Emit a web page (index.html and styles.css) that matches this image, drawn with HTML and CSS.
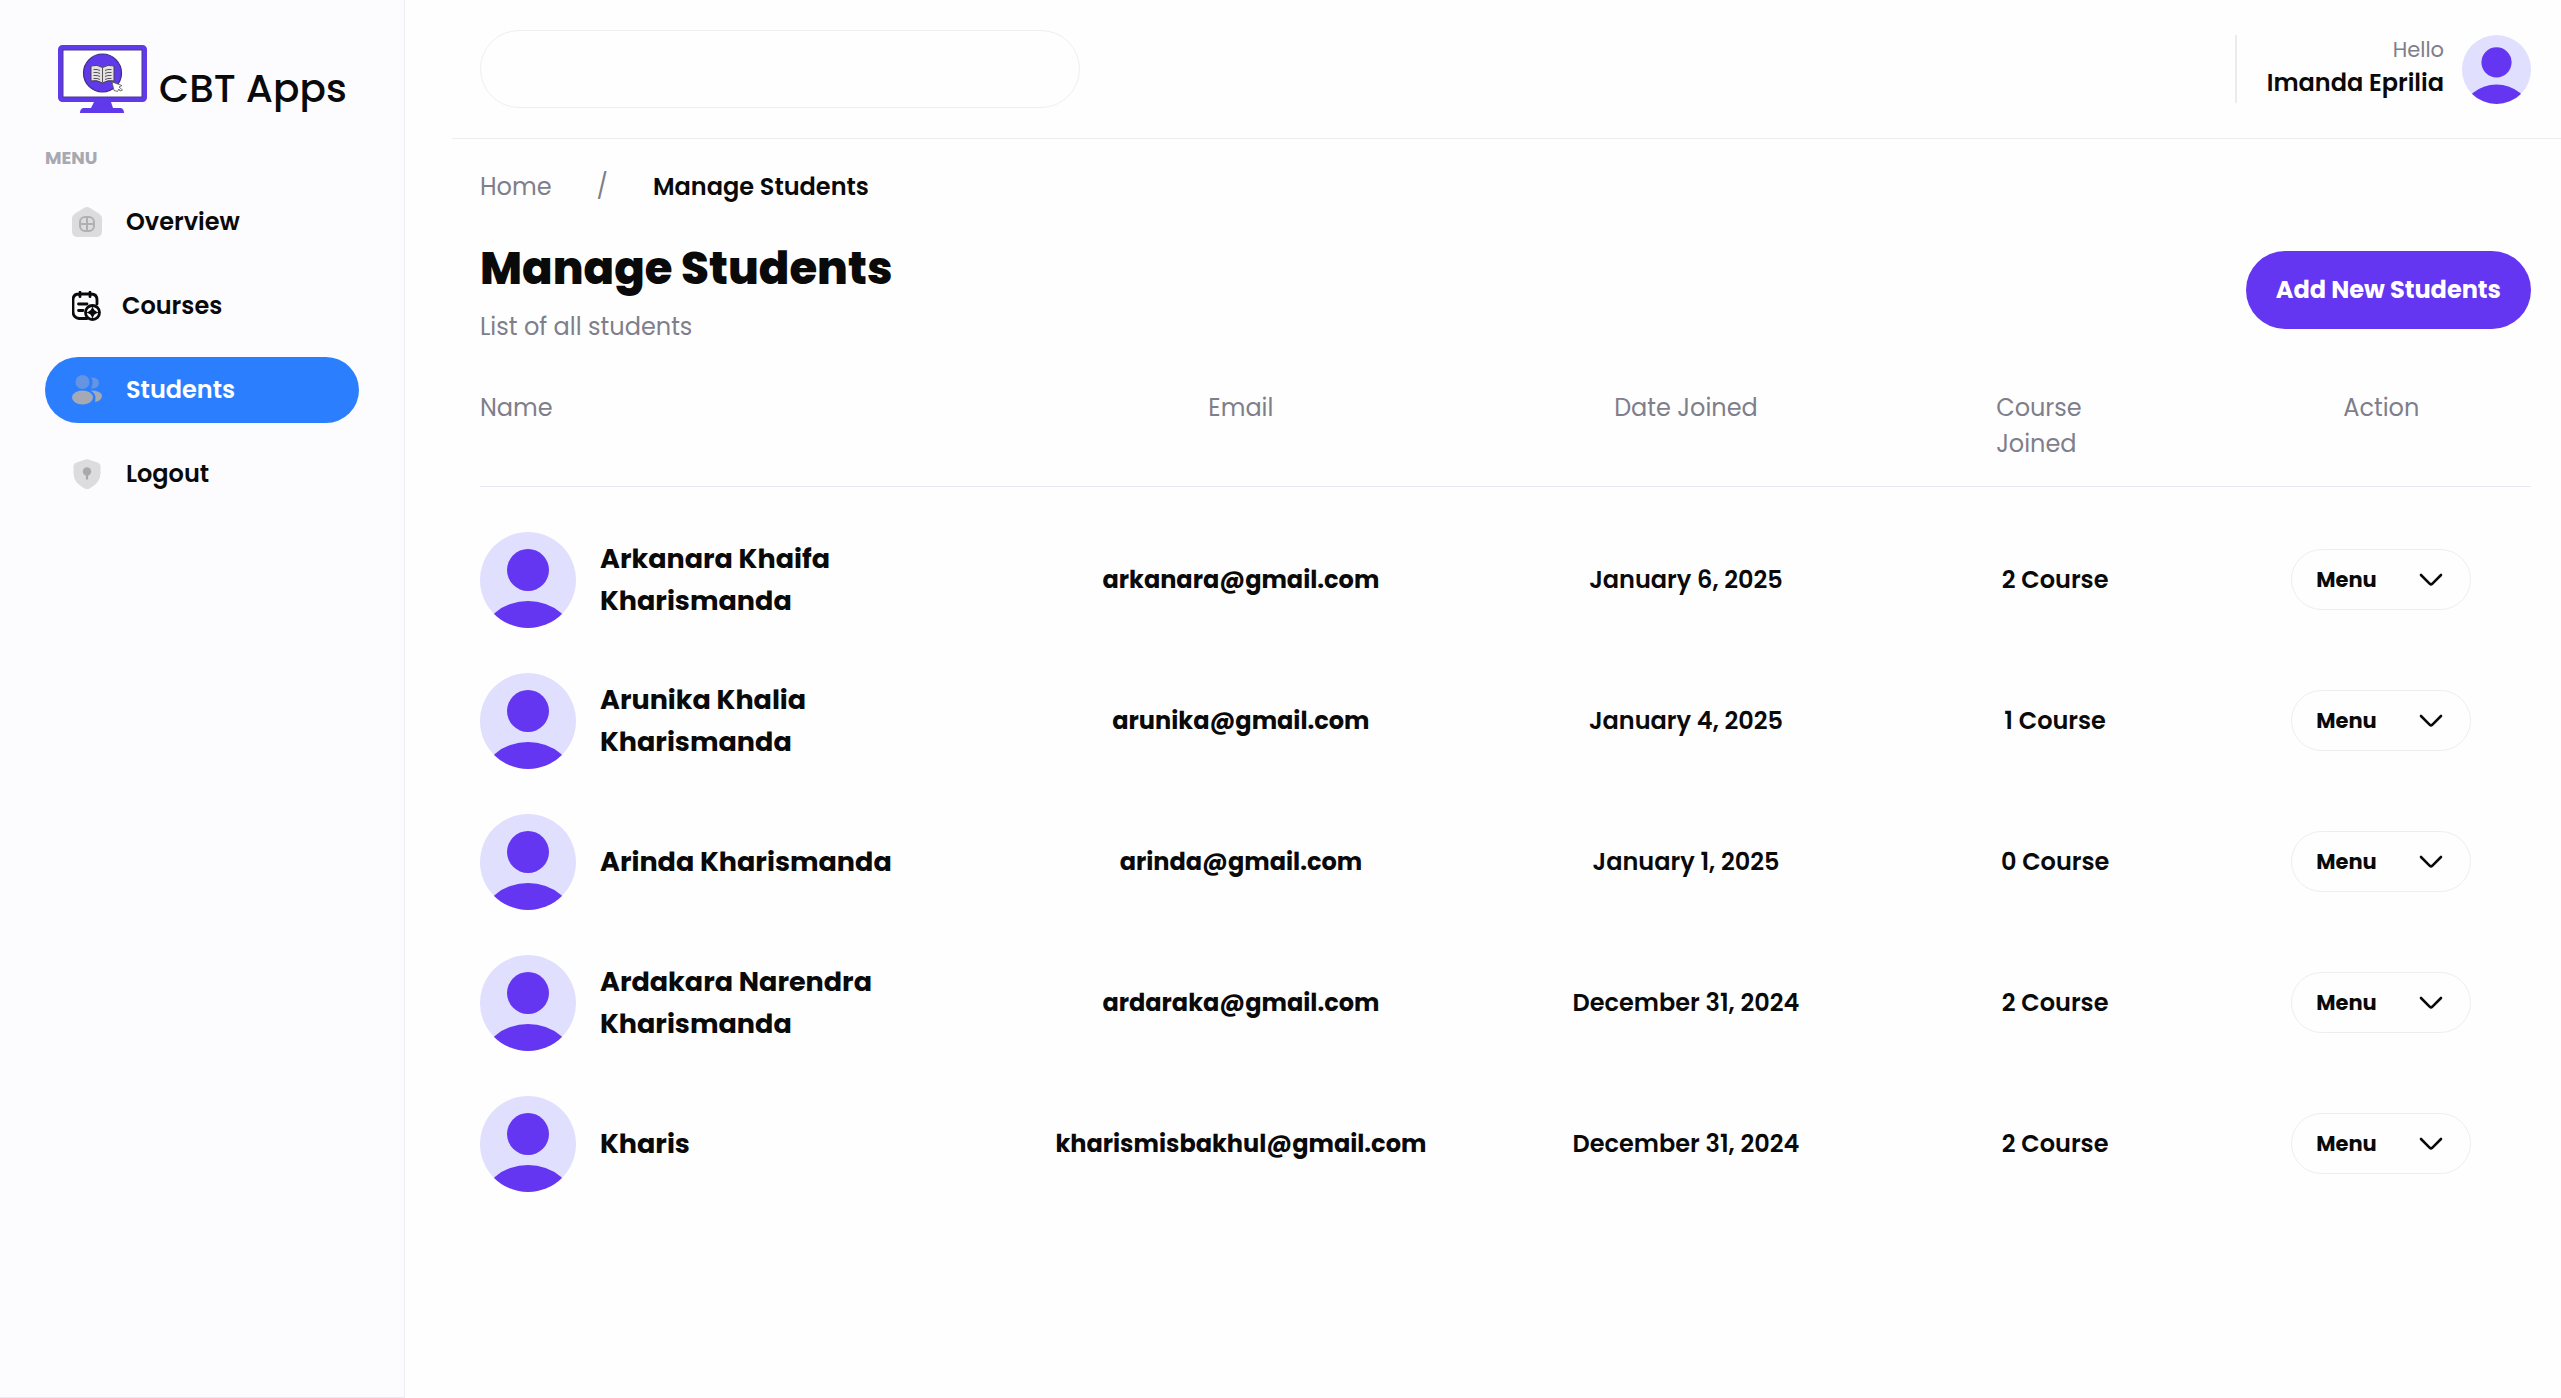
FILE: index.html
```html
<!DOCTYPE html>
<html lang="en">
<head>
<meta charset="utf-8">
<meta name="viewport" content="width=device-width, initial-scale=1">
<title>CBT Apps - Manage Students</title>
<link rel="stylesheet" href="styles.css">
</head>
<body>
<svg class="defs" aria-hidden="true">
  <symbol id="avatar" viewBox="0 0 96 96">
    <clipPath id="avatar-clip"><circle cx="48" cy="48" r="48"/></clipPath>
    <circle cx="48" cy="48" r="48" fill="#e0e0fe"/>
    <circle cx="48" cy="38" r="21" fill="#6436f1"/>
    <ellipse cx="48" cy="108" rx="46" ry="39" fill="#6436f1" clip-path="url(#avatar-clip)"/>
  </symbol>
  <symbol id="chevron" viewBox="0 0 24 14">
    <path d="M2 2 10.800 10.800q1.200 1 2.400 0L22 2" fill="none" stroke="#0a0a0a" stroke-width="2.600" stroke-linecap="round"/>
  </symbol>
</svg>
<div class="layout">
  <aside class="sidebar">
    <a class="brand" href="#">
      <svg class="brand-mark" viewBox="0 0 89 68" aria-hidden="true">
        <rect x="2.500" y="2.500" width="84" height="52" rx="2" fill="#fff" stroke="#6039ea" stroke-width="5"/>
        <rect x="5" y="5" width="79" height="47" fill="none" stroke="#4a3b8c" stroke-width="1"/>
        <path d="M36 57h17l2 6h8q3 1 3 5H22q0-4 3-5h8z" fill="#6039ea"/>
        <circle cx="44.500" cy="28" r="19" fill="#6039ea" stroke="#3d2f80" stroke-width="1.200"/>
        <path d="M33 21q6-2 11.500 1.500Q50 19 56 21v15q-6-1.500-11.500 2Q39 34.500 33 36z" fill="#e6e2e4" stroke="#444" stroke-width="1"/>
        <path d="M44.500 22.500v15M35.500 24.500q4-.500 6.500 1M35.500 27.500q4-.500 6.500 1M35.500 30.500q4-.500 6.500 1M35.500 33.500q4-.500 6.500 1M53.500 24.500q-4-.500-6.500 1M53.500 27.500q-4-.500-6.500 1M53.500 30.500q-4-.500-6.500 1M53.500 33.500q-4-.500-6.500 1" fill="none" stroke="#555" stroke-width="1"/>
        <path d="m54 37 10 3.500-3 1.500 3.500 3-2.500 1-1-2-1.500 2.500-3.500-1z" fill="#fff" stroke="#555" stroke-width=".8"/>
      </svg>
      <span class="brand-name">CBT Apps</span>
    </a>
    <nav class="nav" aria-label="Main">
      <h2 class="nav-title">MENU</h2>
      <a class="nav-link" href="#">
        <svg class="nav-icon" viewBox="0 0 30 30" aria-hidden="true">
          <path d="M12 1q3-2 6 0l9 5.500q3 2 3 5V24q0 6-6 6H6q-6 0-6-6V11.500q0-3 3-5z" fill="#dcdcde"/>
          <rect x="8" y="10" width="14" height="14" rx="5" fill="none" stroke="#b0b0b4" stroke-width="2"/>
          <path d="M15 10v14M8 17h14" stroke="#b0b0b4" stroke-width="2"/>
        </svg>
        <span>Overview</span>
      </a>
      <a class="nav-link nav-link-close" href="#">
        <svg class="nav-icon" viewBox="0 0 30 30" fill="none" stroke="#0a0a0a" stroke-width="2.800" stroke-linecap="round" aria-hidden="true">
          <path d="M15 27.500H7q-6-1-6-7V9q0-6 6-6h12q6 0 6 6v4M8 1.200v4.500M18 1.200v4.500M6.500 13h8.500M6.500 19.500h4.500"/>
          <circle cx="20.500" cy="21.500" r="7"/>
          <path d="M20.500 17.500q1 3 4 4-3 1-4 4-1-3-4-4 3-1 4-4z" fill="#0a0a0a" stroke-width="1.500"/>
        </svg>
        <span>Courses</span>
      </a>
      <a class="nav-link nav-link-active" href="#" aria-current="page">
        <svg class="nav-icon" viewBox="0 0 30 30" aria-hidden="true">
          <circle cx="10.500" cy="7" r="7" fill="#6494e2"/>
          <path d="M19 13.500q3-6.500 0-11 8 0 8 5.500t-8 5.500z" fill="#6494e2"/>
          <ellipse cx="10.500" cy="22.500" rx="10.500" ry="7" fill="#a4a9b4"/>
          <path d="M18.500 15.500q11 0 11.500 5.500-.5 5-7 6 .5-1.500.5-4 0-5-5-7.500z" fill="#a4a9b4"/>
        </svg>
        <span>Students</span>
      </a>
      <a class="nav-link" href="#">
        <svg class="nav-icon" viewBox="0 0 30 30" aria-hidden="true">
          <path d="M13.500.5q1.500-.5 3 0l9 3q3 1 3 4V14q0 10-11 15.500-2.500 1-5 0Q1.500 24 1.500 14V7.500q0-3 3-4z" fill="#dcdcde"/>
          <circle cx="15" cy="12.500" r="4.200" fill="#a9a9ad"/>
          <path d="M15 14v6.500" stroke="#a9a9ad" stroke-width="2.200"/>
        </svg>
        <span>Logout</span>
      </a>
    </nav>
  </aside>
  <div class="content">
    <header class="topbar">
      <input class="search" type="search" aria-label="Search">
      <div class="profile">
        <div class="profile-text">
          <span class="profile-hello">Hello</span>
          <span class="profile-name">Imanda Eprilia</span>
        </div>
        <svg class="avatar-small" role="img" aria-label="Imanda Eprilia"><use href="#avatar"/></svg>
      </div>
    </header>
    <main class="page">
      <nav class="crumbs" aria-label="Breadcrumb">
        <a href="#">Home</a>
        <span>/</span>
        <span class="crumb-current">Manage Students</span>
      </nav>
      <div class="page-head">
        <div>
          <h1>Manage Students</h1>
          <p>List of all students</p>
        </div>
        <button class="add-button" type="button">Add New Students</button>
      </div>
      <table class="students">
        <colgroup>
          <col class="col-name"><col class="col-email"><col class="col-date"><col class="col-course"><col class="col-action">
        </colgroup>
        <thead>
          <tr>
            <th scope="col">Name</th>
            <th scope="col">Email</th>
            <th scope="col">Date Joined</th>
            <th scope="col"><span class="th-course">Course Joined</span></th>
            <th scope="col">Action</th>
          </tr>
        </thead>
        <tbody>
          <tr>
            <td><div class="student"><svg class="avatar" aria-hidden="true"><use href="#avatar"/></svg><span class="student-name">Arkanara Khaifa Kharismanda</span></div></td>
            <td class="email">arkanara@gmail.com</td><td>January 6, 2025</td><td>2 Course</td>
            <td><button class="menu" type="button">Menu<svg class="chevron" aria-hidden="true"><use href="#chevron"/></svg></button></td>
          </tr>
          <tr>
            <td><div class="student"><svg class="avatar" aria-hidden="true"><use href="#avatar"/></svg><span class="student-name">Arunika Khalia Kharismanda</span></div></td>
            <td class="email">arunika@gmail.com</td><td>January 4, 2025</td><td>1 Course</td>
            <td><button class="menu" type="button">Menu<svg class="chevron" aria-hidden="true"><use href="#chevron"/></svg></button></td>
          </tr>
          <tr>
            <td><div class="student"><svg class="avatar" aria-hidden="true"><use href="#avatar"/></svg><span class="student-name">Arinda Kharismanda</span></div></td>
            <td class="email">arinda@gmail.com</td><td>January 1, 2025</td><td>0 Course</td>
            <td><button class="menu" type="button">Menu<svg class="chevron" aria-hidden="true"><use href="#chevron"/></svg></button></td>
          </tr>
          <tr>
            <td><div class="student"><svg class="avatar" aria-hidden="true"><use href="#avatar"/></svg><span class="student-name">Ardakara Narendra Kharismanda</span></div></td>
            <td class="email">ardaraka@gmail.com</td><td>December 31, 2024</td><td>2 Course</td>
            <td><button class="menu" type="button">Menu<svg class="chevron" aria-hidden="true"><use href="#chevron"/></svg></button></td>
          </tr>
          <tr>
            <td><div class="student"><svg class="avatar" aria-hidden="true"><use href="#avatar"/></svg><span class="student-name">Kharis</span></div></td>
            <td class="email">kharismisbakhul@gmail.com</td><td>December 31, 2024</td><td>2 Course</td>
            <td><button class="menu" type="button">Menu<svg class="chevron" aria-hidden="true"><use href="#chevron"/></svg></button></td>
          </tr>
        </tbody>
      </table>
    </main>
  </div>
</div>
</body>
</html>
```
FILE: styles.css
```css
* {
  box-sizing: border-box;
}

body {
  margin: 0;
  background: #fefefe;
  color: #0a0a0a;
  font-family: Poppins, Inter, "Noto Sans", sans-serif;
  font-size: 24px;
  line-height: 36px;
}

h1, h2, p {
  margin: 0;
}

a {
  color: inherit;
  text-decoration: none;
}

button, input {
  font: inherit;
  color: inherit;
}

svg {
  display: block;
  flex-shrink: 0;
}

.defs {
  position: absolute;
  width: 0;
  height: 0;
}

.layout {
  display: flex;
  min-height: 100vh;
}

/* Sidebar */
.sidebar {
  flex: 0 0 405px;
  padding: 45px;
  background: #fcfbfd;
  border-right: 1px solid #eeebf2;
  border-bottom: 1px solid #eeebf2;
}

.brand {
  display: flex;
  align-items: flex-start;
  gap: 12px;
  padding-left: 13px;
}

.brand-mark {
  width: 89px;
  height: 68px;
}

.brand-name {
  padding-top: 20px;
  font-size: 39px;
  font-weight: 500;
  line-height: 48px;
  white-space: nowrap;
}

.nav {
  display: flex;
  flex-direction: column;
  gap: 18px;
  padding-top: 31px;
}

.nav-title {
  color: #a7a9b1;
  font-size: 18px;
  line-height: 27px;
}

.nav-link {
  display: flex;
  align-items: center;
  gap: 24px;
  height: 66px;
  padding: 0 27px;
  border-radius: 33px;
  font-weight: 600;
}

.nav-link-close {
  gap: 20px;
}

.nav-link-active {
  background: #2b7fff;
  color: #fff;
}

.nav-icon {
  width: 30px;
  height: 30px;
}

/* Content */
.content {
  flex: 1;
  min-width: 0;
  padding-left: 47px;
}

.topbar {
  display: flex;
  align-items: center;
  justify-content: space-between;
  padding: 30px 30px 30px 28px;
  border-bottom: 1px solid #eeedf0;
}

.search {
  width: 600px;
  height: 78px;
  padding: 0 36px;
  border: 1px solid #efeef1;
  border-radius: 39px;
  background: transparent;
}

.profile {
  display: flex;
  align-items: center;
  gap: 18px;
}

.profile-text {
  display: flex;
  flex-direction: column;
  align-items: flex-end;
  min-height: 68px;
  padding-left: 30px;
  border-left: 2px solid #eeeaf0;
}

.profile-hello {
  color: #7f7f8b;
  font-size: 21px;
  line-height: 30px;
}

.profile-name {
  font-weight: 600;
}

.avatar-small {
  width: 69px;
  height: 69px;
}

.page {
  padding: 30px 30px 48px 28px;
}

.crumbs {
  display: flex;
  align-items: center;
  gap: 45px;
  color: #7f7f8b;
}

.crumb-current {
  color: #0a0a0a;
  font-weight: 600;
}

.page-head {
  display: flex;
  align-items: center;
  justify-content: space-between;
  padding: 30px 0 36px;
}

.page-head h1 {
  font-size: 45px;
  font-weight: 800;
  line-height: 68px;
}

.page-head p {
  padding-top: 6px;
  color: #7f7f8b;
}

.add-button {
  height: 78px;
  padding: 0 30px;
  border: 0;
  border-radius: 39px;
  background: #6436f1;
  color: #fff;
  font-weight: 700;
}

/* Students table */
.students {
  width: 100%;
  table-layout: fixed;
  border-collapse: collapse;
}

.col-name { width: 24.8%; }
.col-email { width: 24.6%; }
.col-date { width: 18.8%; }
.col-course { width: 17.2%; }
.col-action { width: 14.6%; }

.students th {
  padding: 9px 0 24px;
  border-bottom: 1px solid #e9e7f0;
  color: #7f7f8b;
  font-weight: 400;
  vertical-align: top;
}

.students th:first-child {
  text-align: left;
}

.th-course {
  display: block;
  width: 118px;
  margin: 0 auto;
  text-align: left;
}

.students td {
  height: 141px;
  padding: 0;
  font-weight: 600;
  text-align: center;
}

.students .email {
  font-weight: 700;
}

.students tbody::before {
  content: "";
  display: block;
  height: 22px;
}

.student {
  display: flex;
  align-items: center;
  gap: 24px;
  text-align: left;
}

.avatar {
  width: 96px;
  height: 96px;
}

.student-name {
  max-width: 306px;
  font-size: 27px;
  font-weight: 700;
  line-height: 42px;
}

.menu {
  display: inline-flex;
  align-items: center;
  justify-content: space-between;
  width: 180px;
  height: 61px;
  padding: 0 27px 0 24px;
  border: 1px solid #efedf2;
  border-radius: 31px;
  background: transparent;
  font-size: 21px;
  font-weight: 700;
  vertical-align: middle;
}

.chevron {
  width: 24px;
  height: 14px;
}
```
